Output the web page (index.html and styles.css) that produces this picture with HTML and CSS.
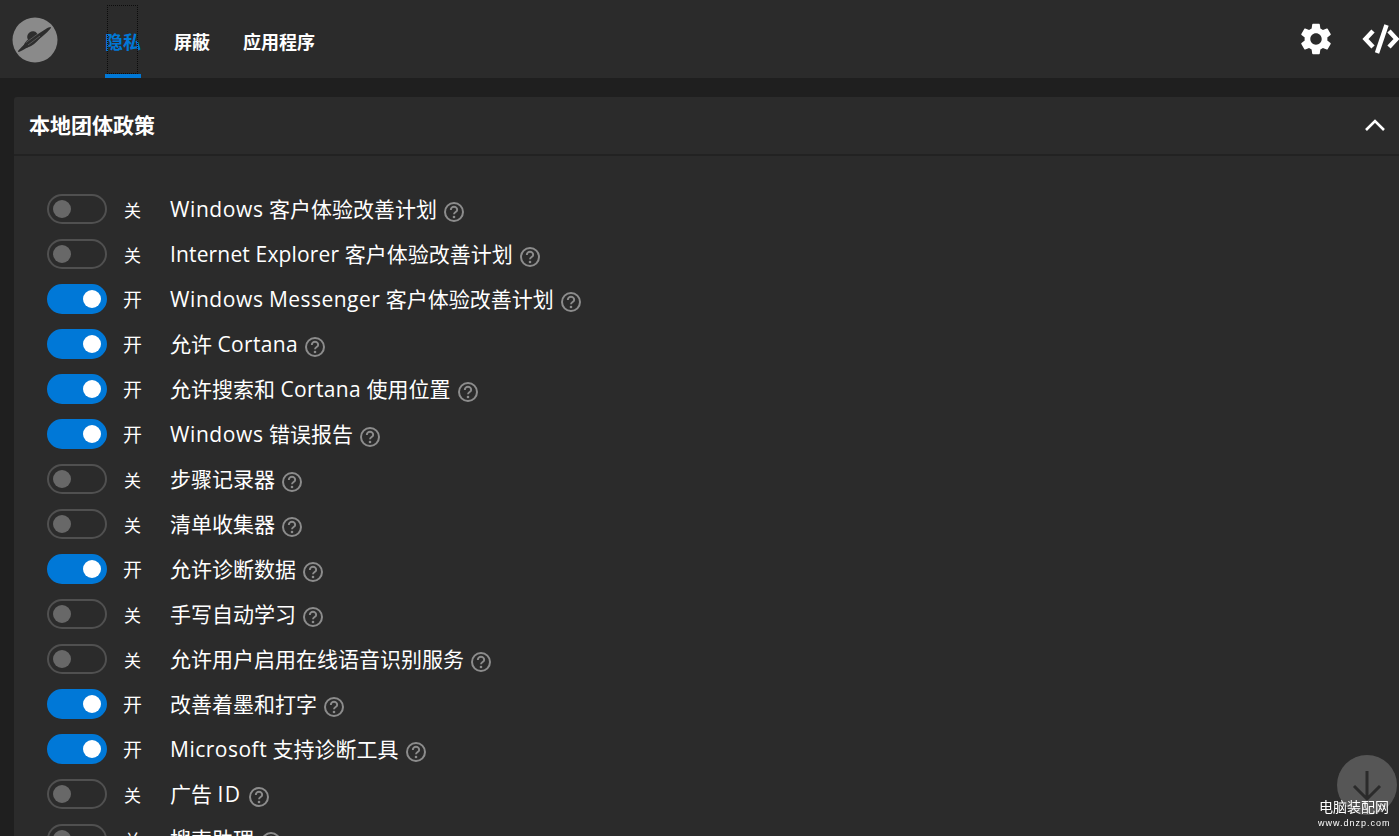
FILE: index.html
```html
<!DOCTYPE html>
<html lang="zh-CN">
<head>
<meta charset="utf-8">
<title>隐私</title>
<link rel="stylesheet" href="styles.css">
</head>
<body>
<svg class="defs" width="0" height="0" aria-hidden="true">
  <symbol id="q" viewBox="0 0 20 20">
    <circle cx="10" cy="10" r="9" fill="none" stroke="currentColor" stroke-width="2"/>
    <path d="M6.800 7.900a3.200 3.200 0 0 1 6.400 0c0 2-3.200 2.300-3.200 4.400" fill="none" stroke="currentColor" stroke-width="1.900"/>
    <circle cx="10" cy="15" r="1.300" fill="currentColor"/>
  </symbol>
</svg>
<header class="topbar">
  <div class="logo">
    <svg viewBox="0 0 46 46" width="46" height="46">
      <circle cx="23" cy="23" r="22.500" fill="#8a8a8a"/>
      <ellipse cx="22.500" cy="22.500" rx="20.500" ry="2.400" transform="rotate(-37 22.500 22.500)" fill="#2d2d2d"/>
      <ellipse cx="20" cy="24" rx="10.500" ry="3.600" transform="rotate(-37 20 24)" fill="#2d2d2d"/>
      <ellipse cx="20.500" cy="19.500" rx="5.500" ry="5" transform="rotate(-37 20.500 19.500)" fill="#2d2d2d"/>
      <path d="M14 25.500 27 16M16 28 28 19" stroke="#6a6a6a" stroke-width=".7" fill="none"/>
    </svg>
  </div>
  <nav class="tabs">
    <a class="tab active">隐私</a>
    <a class="tab">屏蔽</a>
    <a class="tab">应用程序</a>
  </nav>
  <div class="tools">
    <svg class="gear" viewBox="0 0 24 24" width="38" height="38"><path fill="#fff" d="M19.140 12.940c.04-.3.06-.61.06-.94 0-.32-.02-.64-.07-.94l2.030-1.580a.49.49 0 0 0 .12-.61l-1.920-3.320a.488.488 0 0 0-.59-.22l-2.390.96c-.5-.38-1.030-.7-1.620-.94l-.36-2.540a.484.484 0 0 0-.48-.41h-3.840c-.24 0-.43.17-.47.41l-.36 2.540c-.59.24-1.130.57-1.620.94l-2.390-.96c-.22-.08-.47 0-.59.22L2.740 8.870c-.12.21-.08.47.12.61l2.030 1.580c-.05.3-.09.63-.09.94s.02.64.07.94l-2.030 1.580a.49.49 0 0 0-.12.61l1.920 3.320c.12.22.37.29.59.22l2.390-.96c.5.38 1.030.7 1.620.94l.36 2.540c.05.24.24.41.48.41h3.840c.24 0 .44-.17.47-.41l.36-2.540c.59-.24 1.130-.56 1.620-.94l2.390.96c.22.08.47 0 .59-.22l1.920-3.320c.12-.22.07-.47-.12-.61l-2.010-1.580zM12 15.600c-1.980 0-3.600-1.620-3.600-3.600s1.620-3.600 3.600-3.600 3.600 1.620 3.600 3.600-1.620 3.600-3.600 3.600z"/></svg>
    <svg class="code" viewBox="0 0 38 32" width="38" height="32"><path d="M11 8 3.500 16l7.500 8M27 8l7.500 8-7.500 8" fill="none" stroke="#fff" stroke-width="4.500"/><path d="M24.500 2 15 30" fill="none" stroke="#fff" stroke-width="4.500"/></svg>
  </div>
</header>
<main class="content">
  <section class="card">
    <div class="card-head">
      <h2>本地团体政策</h2>
      <svg class="chev" viewBox="0 0 22 14" width="22" height="14"><path d="M2 12 11 3l9 9" fill="none" stroke="#fff" stroke-width="2.600"/></svg>
    </div>
    <ul class="rows">
      <li class="row"><span class="sw"></span><span class="st off">关</span><span class="name"><span class="win">Windows</span> 客户体验改善计划</span><svg class="help"><use href="#q"/></svg></li>
      <li class="row"><span class="sw"></span><span class="st off">关</span><span class="name"><span class="ie">Internet Explorer</span> 客户体验改善计划</span><svg class="help"><use href="#q"/></svg></li>
      <li class="row"><span class="sw on"></span><span class="st">开</span><span class="name"><span class="win">Windows</span> <span class="msg">Messenger</span> 客户体验改善计划</span><svg class="help"><use href="#q"/></svg></li>
      <li class="row"><span class="sw on"></span><span class="st">开</span><span class="name">允许 <span class="cor">Cortana</span></span><svg class="help"><use href="#q"/></svg></li>
      <li class="row"><span class="sw on"></span><span class="st">开</span><span class="name">允许搜索和 <span class="cor">Cortana</span> 使用位置</span><svg class="help"><use href="#q"/></svg></li>
      <li class="row"><span class="sw on"></span><span class="st">开</span><span class="name"><span class="win">Windows</span> 错误报告</span><svg class="help"><use href="#q"/></svg></li>
      <li class="row"><span class="sw"></span><span class="st off">关</span><span class="name">步骤记录器</span><svg class="help"><use href="#q"/></svg></li>
      <li class="row"><span class="sw"></span><span class="st off">关</span><span class="name">清单收集器</span><svg class="help"><use href="#q"/></svg></li>
      <li class="row"><span class="sw on"></span><span class="st">开</span><span class="name">允许诊断数据</span><svg class="help"><use href="#q"/></svg></li>
      <li class="row"><span class="sw"></span><span class="st off">关</span><span class="name">手写自动学习</span><svg class="help"><use href="#q"/></svg></li>
      <li class="row"><span class="sw"></span><span class="st off">关</span><span class="name">允许用户启用在线语音识别服务</span><svg class="help"><use href="#q"/></svg></li>
      <li class="row"><span class="sw on"></span><span class="st">开</span><span class="name">改善着墨和打字</span><svg class="help"><use href="#q"/></svg></li>
      <li class="row"><span class="sw on"></span><span class="st">开</span><span class="name"><span class="ms">Microsoft</span> 支持诊断工具</span><svg class="help"><use href="#q"/></svg></li>
      <li class="row"><span class="sw"></span><span class="st off">关</span><span class="name">广告 <span class="id">ID</span></span><svg class="help"><use href="#q"/></svg></li>
      <li class="row"><span class="sw"></span><span class="st off">关</span><span class="name">搜索助理</span><svg class="help"><use href="#q"/></svg></li>
    </ul>
  </section>
</main>
<div class="scroll-btn">
  <svg viewBox="0 0 60 60" width="60" height="60"><path d="M30 16v28M17 31l13 13 13-13" fill="none" stroke="#2b2b2b" stroke-width="3"/></svg>
</div>
<div class="mark"><div class="mark-cn">电脑装配网</div><div class="mark-en">www.dnzp.com</div></div>
</body>
</html>
```
FILE: styles.css
```css
* { box-sizing: border-box; }
html, body { margin: 0; height: 100%; }
body {
  height: 836px;
  overflow: hidden;
  background: #1f1f1f;
  color: #fff;
  font-family: "Open Sans", "Noto Sans CJK SC", sans-serif;
}
.defs { position: absolute; }
.topbar {
  height: 78px;
  background: #2b2b2b;
  display: flex;
  align-items: stretch;
  padding-left: 12px;
  overflow: hidden;
}
.logo { width: 46px; margin-right: 47px; display: flex; align-items: center; padding-top: 2px; }
.tabs { display: flex; gap: 33px; font-size: 18px; font-weight: 700; font-family: "Noto Sans CJK SC", sans-serif; }
.tab { position: relative; display: flex; align-items: center; padding-top: 3px; height: 78px; }
.tab.active { color: #0078d7; border-bottom: 4px solid #0078d7; padding-top: 7px; }
.tab.active::before {
  content: "";
  position: absolute;
  left: 2px; right: 3px; top: 5px; bottom: 0;
  border: 1px dotted #0c0c0c;
}
.tools { margin-left: auto; display: flex; align-items: center; gap: 27px; margin-right: -1px; flex-shrink: 0; }
.gear { display: block; }
.code { display: block; }
.content { padding: 19px 0 0 14px; }
.card { background: #2b2b2b; border-radius: 3px 0 0 0; height: 760px; }
.card-head {
  height: 59px;
  border-bottom: 2px solid #222;
  display: flex;
  align-items: center;
  justify-content: space-between;
  padding: 0 13px 4px 15px;
}
.card-head h2 { margin: 0; font-size: 21px; font-weight: 700; font-family: "Noto Sans CJK SC", sans-serif; }
.chev { display: block; margin-top: 2px; }
.rows { list-style: none; margin: 0; padding: 30px 0 0 33px; }
.row { height: 45px; display: flex; align-items: center; }
.sw {
  width: 60px; height: 30px; border-radius: 15px;
  border: 2px solid #505050;
  display: flex; align-items: center; padding-left: 4px;
}
.sw::before { content: ""; width: 18px; height: 18px; border-radius: 50%; background: #686868; }
.sw.on { background: #0078d7; border-color: #0078d7; justify-content: flex-end; padding: 0 4px 0 0; }
.sw.on::before { background: #fff; }
.st { width: 63px; padding-left: 16px; font-size: 19px; font-family: "Noto Sans CJK SC", sans-serif; }
.st.off { padding-left: 17px; font-size: 17px; padding-top: 1px; }
.name { font-size: 21px; line-height: 28px; white-space: pre; }
.win { letter-spacing: .6px; }
.ms { letter-spacing: .5px; }
.msg { letter-spacing: .45px; }
.ie { letter-spacing: .15px; }
.cor { letter-spacing: .35px; }
.id { letter-spacing: 1.5px; }
.help { width: 20px; height: 20px; margin: 6px 0 0 7px; color: #8c8c8c; }
.scroll-btn {
  position: fixed; left: 1337px; top: 755px;
  width: 60px; height: 60px; border-radius: 50%; background: #565656;
}
.mark { position: fixed; left: 1318px; top: 797px; width: 72px; text-align: center; color: #fff; }
.mark-cn { font-size: 14px; line-height: 18px; font-family: "Noto Sans CJK SC", sans-serif; white-space: nowrap; }
.mark-en { font-size: 9px; line-height: 14px; letter-spacing: 1px; font-family: "Liberation Sans", sans-serif; white-space: nowrap; margin-top: 1px; }
```
